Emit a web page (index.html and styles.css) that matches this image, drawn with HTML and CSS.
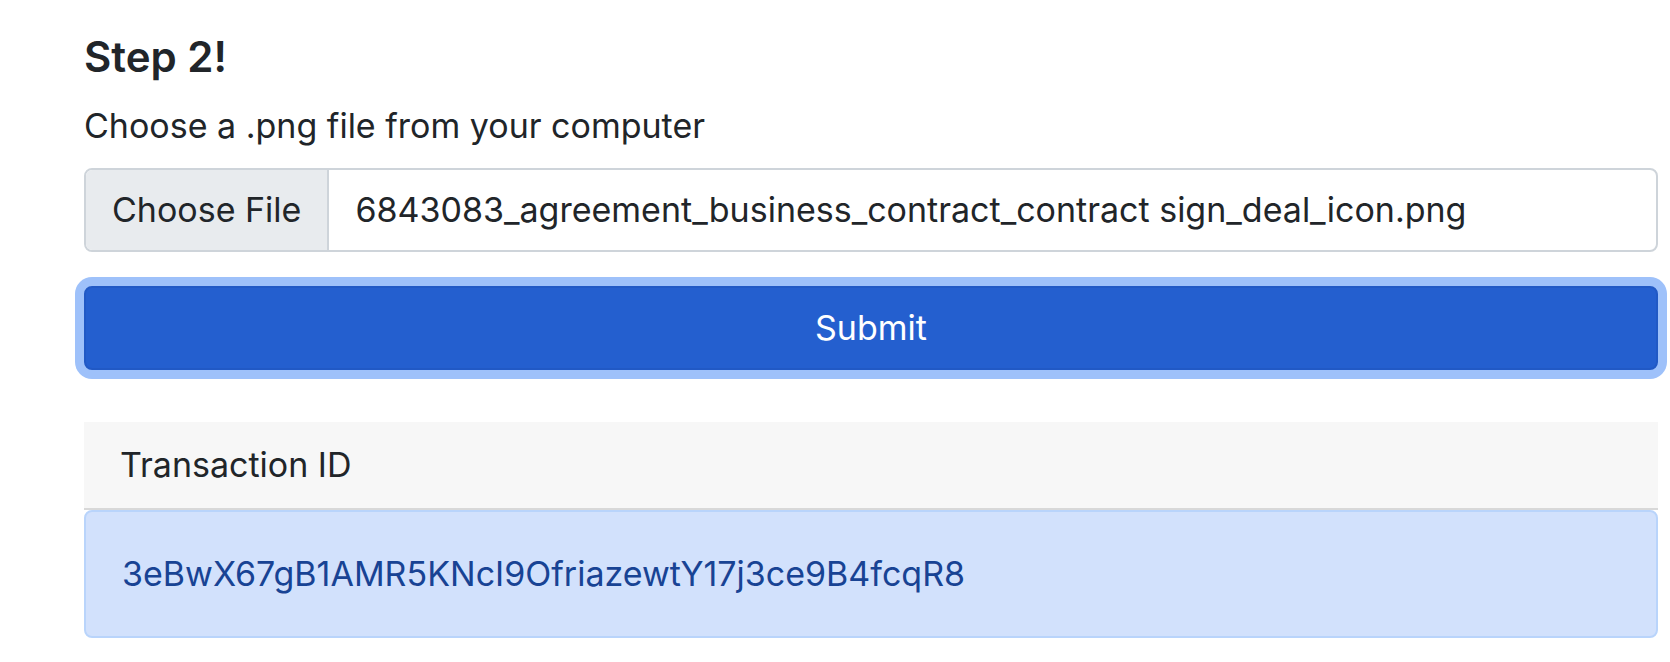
FILE: index.html
```html
<!DOCTYPE html>
<html lang="en">
<head>
<meta charset="utf-8">
<meta name="viewport" content="width=device-width, initial-scale=1">
<title>Step 2</title>
<link rel="stylesheet" href="styles.css">
</head>
<body>
<main class="page">
  <form class="upload">
    <h1 class="title">Step 2!</h1>
    <label class="form-label" for="file">Choose a .png file from your computer</label>
    <div class="file-control">
      <span class="file-button">Choose File</span>
      <span class="file-name">6843083_agreement_business_contract_contract sign_deal_icon.png</span>
      <input class="file-input" id="file" type="file" accept=".png">
    </div>
    <button class="submit" type="button">Submit</button>
  </form>
  <section class="result">
    <div class="result-header">Transaction ID</div>
    <div class="alert">3eBwX67gB1AMR5KNcI9OfriazewtY17j3ce9B4fcqR8</div>
  </section>
</main>
</body>
</html>
```

FILE: styles.css
```css
* {
  box-sizing: border-box;
}

body {
  margin: 0;
  background: #fff;
  color: #212529;
  font-family: Inter, "Liberation Sans", sans-serif;
  font-size: 34px;
  line-height: 52px;
}

.page {
  padding: 32px 12px 24px 84px;
}

.upload {
  display: flex;
  flex-direction: column;
}

.title {
  margin: 0 0 18px;
  font-size: 42px;
  line-height: 50px;
  font-weight: 600;
}

.form-label {
  margin-bottom: 16px;
}

.file-control {
  position: relative;
  display: flex;
  overflow: hidden;
  border: 2px solid #ced4da;
  border-radius: 8px;
}

.file-button {
  padding: 14px 26px;
  border-right: 2px solid #ced4da;
  background: #e8ebee;
  white-space: nowrap;
}

.file-name {
  flex: 1;
  min-width: 0;
  overflow: hidden;
  padding: 14px 26px;
  text-overflow: ellipsis;
  white-space: nowrap;
}

/* The native control covers the styled one and receives the clicks. */
.file-input {
  position: absolute;
  inset: 0;
  width: 100%;
  opacity: 0;
  cursor: pointer;
}

.submit {
  margin-top: 34px;
  padding: 14px 26px;
  border: 2px solid #2159c5;
  border-radius: 8px;
  background: #245fcf;
  box-shadow: 0 0 0 9px #9ec1fa;
  color: #fff;
  font: inherit;
  cursor: pointer;
}

.result {
  margin-top: 52px;
}

.result-header {
  padding: 17px 36px;
  border-bottom: 2px solid #d8d8d8;
  background: #f7f7f7;
}

.alert {
  padding: 36px;
  border: 2px solid #b9d4fb;
  border-radius: 8px;
  background: #d2e1fc;
  color: #184394;
  overflow-wrap: anywhere;
}
```
